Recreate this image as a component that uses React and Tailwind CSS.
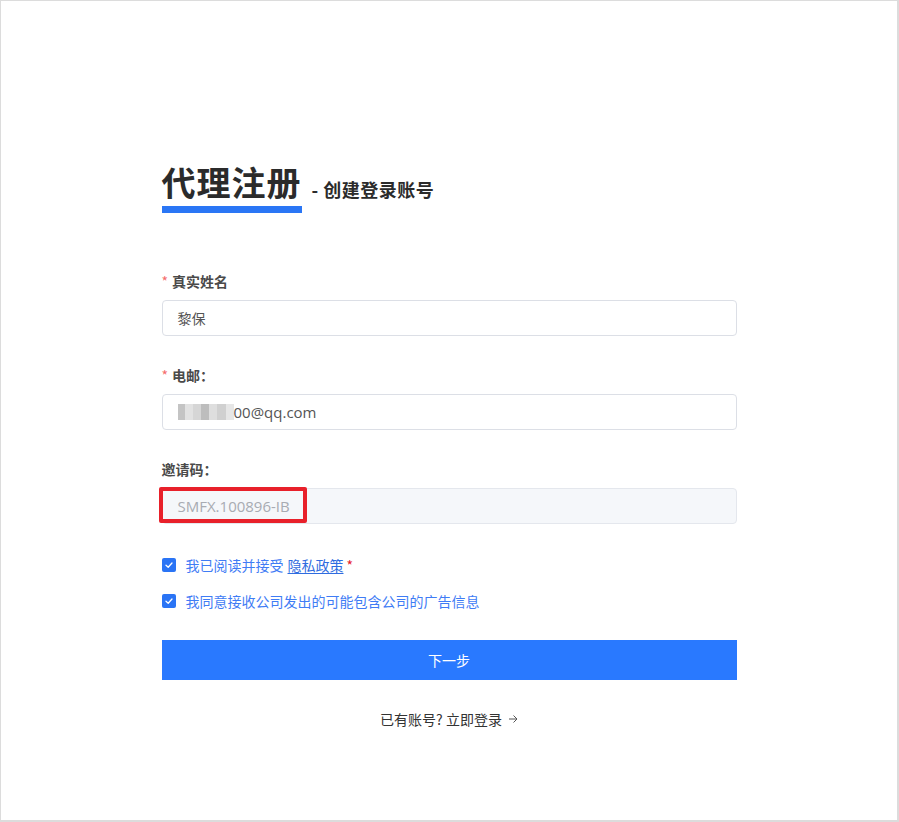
import React from "react";

const font = { fontFamily: '"Noto Sans CJK SC", "Noto Sans", sans-serif' };

function Check() {
  return (
    <span className="flex h-[14px] w-[14px] shrink-0 items-center justify-center rounded-[2px] bg-[#2a74f5]">
      <svg width="10" height="10" viewBox="0 0 10 10" fill="none">
        <path d="M2 5.2 L4.2 7.2 L8 3" stroke="white" strokeWidth="1.3" strokeLinecap="round" strokeLinejoin="round" />
      </svg>
    </span>
  );
}

function Label({ children, required }) {
  return (
    <div className="flex h-[20px] items-center text-[14px] font-bold leading-[20px] text-[#4a4a4a]">
      {required && <span className="mr-[4px] text-[#f56c6c] font-normal">*</span>}
      {children}
    </div>
  );
}

export default function App() {
  return (
    <div style={font} className="box-border h-[822px] w-[899px] border-l border-t border-r-2 border-b-2 border-[#dcdcdc] bg-white">
      <div className="mx-auto w-[575px] pt-[159px]">
        <div className="flex items-end">
          <div className="flex flex-col">
            <div className="text-[34px] font-bold leading-[44px] tracking-[1px] text-[#2b2b2b]">代理注册</div>
            <div className="mt-[2px] h-[7px] w-[140px] bg-[#2a76f5]"></div>
          </div>
          <div className="mb-[12px] ml-[10px] text-[18px] font-bold leading-[24px] tracking-[0.5px] text-[#2b2b2b]">- 创建登录账号</div>
        </div>

        <div className="mt-[58px] flex flex-col">
          <Label required>真实姓名</Label>
          <div className="mt-[9px] flex h-[36px] items-center rounded-[4px] border border-[#dcdfe6] px-[15px] text-[14px] text-[#555]">
            黎保
          </div>

          <div className="mt-[29px]">
            <Label required>电邮：</Label>
          </div>
          <div className="mt-[9px] flex h-[36px] items-center rounded-[4px] border border-[#dcdfe6] px-[15px] text-[15px] text-[#555]">
            <span className="flex h-[16px] w-[56px] items-stretch">
              <span className="w-[7px] bg-[#c4c4c4]"></span>
              <span className="w-[8px] bg-[#e2e2e2]"></span>
              <span className="w-[8px] bg-[#d6d6d6]"></span>
              <span className="w-[8px] bg-[#bdbdbd]"></span>
              <span className="w-[8px] bg-[#dedede]"></span>
              <span className="w-[9px] bg-[#d0d0d0]"></span>
              <span className="w-[8px] bg-[#e6e6e6]"></span>
            </span>
            <span style={{ fontFamily: '"Open Sans", "Noto Sans", sans-serif' }}>00@qq.com</span>
          </div>

          <div className="mt-[29px]">
            <Label>邀请码：</Label>
          </div>
          <div className="relative mt-[9px] flex h-[36px] items-center rounded-[4px] border border-[#e4e7ed] bg-[#f5f7fa] px-[15px] text-[15px] text-[#a8abb2]">
            <span style={{ fontFamily: '"Open Sans", "Noto Sans", sans-serif' }}>SMFX.100896-IB</span>
            <div className="absolute left-[-4px] top-[-2px] h-[36px] w-[148px] rounded-[2px] border-[4px] border-[#e8202a]"></div>
          </div>

          <div className="mt-[31px] flex items-center text-[14px] leading-[20px] text-[#3f7cf5]">
            <Check />
            <span className="ml-[10px]">我已阅读并接受</span>
            <span className="ml-[4px] text-[#2f6ce0] underline underline-offset-2">隐私政策</span>
            <span className="ml-[3px] text-[#e8202a]">*</span>
          </div>
          <div className="mt-[16px] flex items-center text-[14px] leading-[20px] text-[#3f7cf5]">
            <Check />
            <span className="ml-[10px]">我同意接收公司发出的可能包含公司的广告信息</span>
          </div>

          <button className="mt-[29px] flex h-[40px] w-full items-center justify-center bg-[#2979ff] text-[14px] text-white">
            下一步
          </button>

          <div className="mt-[29px] flex items-center justify-center text-[14px] leading-[20px] text-[#333]">
            已有账号? 立即登录
            <svg className="ml-[6px]" width="10" height="10" viewBox="0 0 10 10" fill="none">
              <path d="M1 5 H9 M5.5 1.5 L9 5 L5.5 8.5" stroke="#555" strokeWidth="1" />
            </svg>
          </div>
        </div>
      </div>
    </div>
  );
}
